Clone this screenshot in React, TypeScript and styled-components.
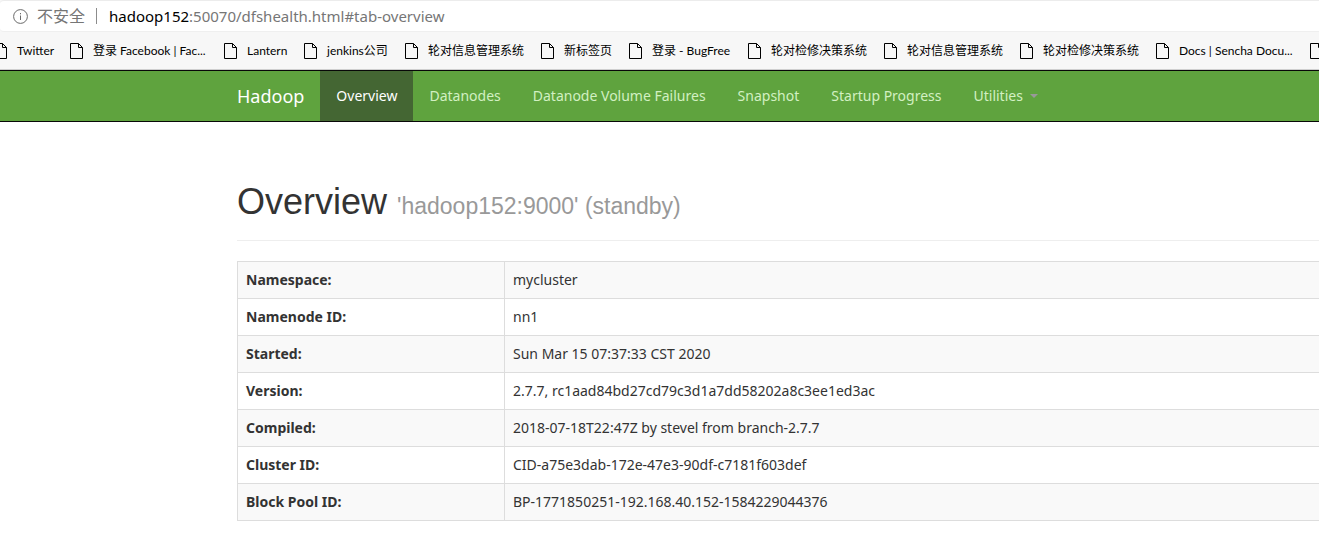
import React from "react";
import styled, { createGlobalStyle } from "styled-components";

const uiFont = `"Noto Sans", "Noto Sans CJK SC", sans-serif`;

const GlobalStyle = createGlobalStyle`
  * { box-sizing: border-box; }
  body {
    margin: 0;
    background: #fff;
    color: #333;
    font-family: ${uiFont};
    font-size: 14px;
    line-height: 20px;
    overflow-x: hidden;
  }
`;

const BrowserChrome = styled.header`
  background: #f7f7f7;
  border-bottom: 1px solid #cfcfcf;
`;

const AddressBar = styled.div`
  display: flex;
  align-items: center;
  height: 32px;
  padding-left: 13px;
  background: #fff;
  border-top: 1px solid #ececec;
  border-bottom: 1px solid #efefef;
  border-radius: 4px 0 0 4px;
  font-size: 16px;
  color: #767676;
`;

const SecurityLabel = styled.span`
  margin-left: 9px;
  padding-right: 11px;
`;

const Separator = styled.span`
  width: 1px;
  height: 16px;
  background: #8c8c8c;
`;

const Url = styled.span`
  margin-left: 12px;
  font-size: 15px;
`;

const Host = styled.span`
  color: #000;
`;

const BookmarkBar = styled.nav`
  display: flex;
  height: 37px;
  margin-left: -6px;
  overflow: hidden;
`;

const Bookmark = styled.a<{ $width: number }>`
  display: flex;
  flex: 0 0 ${(p) => p.$width}px;
  align-items: center;
  gap: 10px;
  color: #000;
  font-family: Lato, "Noto Sans CJK SC", sans-serif;
  font-size: 12px;
  line-height: 16px;
  white-space: nowrap;
  text-decoration: none;
`;

const NavBar = styled.nav`
  display: flex;
  padding-left: 222px;
  background: #5fa33e;
  border-top: 1px solid #080808;
  border-bottom: 1px solid #080808;
`;

const Brand = styled.a`
  padding: 15px 16px 15px 15px;
  color: #fff;
  font-size: 18px;
  line-height: 20px;
  text-decoration: none;
`;

const NavLink = styled.a<{ $active?: boolean }>`
  display: flex;
  align-items: center;
  gap: 7px;
  padding: 15px 16px;
  background: ${(p) => (p.$active ? "#446633" : "transparent")};
  color: ${(p) => (p.$active ? "#fff" : "#d2f0c2")};
  white-space: nowrap;
  text-decoration: none;
`;

const Caret = styled.span`
  border-top: 4px solid #999;
  border-left: 4px solid transparent;
  border-right: 4px solid transparent;
`;

const Content = styled.main`
  padding: 60px 0 20px 237px;
`;

const PageHeader = styled.div`
  padding-bottom: 19px;
  border-bottom: 1px solid #eee;
`;

const Title = styled.h1`
  margin: 0;
  font-family: "Liberation Sans", Arial, sans-serif;
  font-size: 36px;
  font-weight: 400;
  line-height: 39px;
`;

const Subtitle = styled.small`
  color: #999;
  font-size: 23px;
  line-height: 24px;
`;

const InfoTable = styled.table`
  width: 100%;
  margin-top: 20px;
  border-collapse: collapse;
  table-layout: fixed;
`;

const InfoRow = styled.tr`
  &:nth-child(odd) { background: #f9f9f9; }
`;

const RowLabel = styled.th`
  width: 267px;
  padding: 8px;
  border: 1px solid #ddd;
  font-weight: 700;
  text-align: left;
`;

const RowValue = styled.td`
  padding: 8px;
  border: 1px solid #ddd;
  border-right: 0;
`;

const bookmarks: [string, number][] = [
  ["Twitter", 76],
  ["登录 Facebook | Fac...", 154],
  ["Lantern", 80],
  ["jenkins公司", 101],
  ["轮对信息管理系统", 136],
  ["新标签页", 88],
  ["登录 - BugFree", 119],
  ["轮对检修决策系统", 136],
  ["轮对信息管理系统", 136],
  ["轮对检修决策系统", 136],
  ["Docs | Sencha Docu...", 154],
  ["", 14],
];

const tabs = ["Overview", "Datanodes", "Datanode Volume Failures", "Snapshot", "Startup Progress"];

const info = [
  ["Namespace:", "mycluster"],
  ["Namenode ID:", "nn1"],
  ["Started:", "Sun Mar 15 07:37:33 CST 2020"],
  ["Version:", "2.7.7, rc1aad84bd27cd79c3d1a7dd58202a8c3ee1ed3ac"],
  ["Compiled:", "2018-07-18T22:47Z by stevel from branch-2.7.7"],
  ["Cluster ID:", "CID-a75e3dab-172e-47e3-90df-c7181f603def"],
  ["Block Pool ID:", "BP-1771850251-192.168.40.152-1584229044376"],
];

const PageIcon = () => (
  <svg width="13" height="16" viewBox="0 0 13 16" fill="none" stroke="#000" aria-hidden="true">
    <path d="M.5 .5H8.5L12.5 4.5V15.5H.5Z" />
    <path d="M8.5 .5V4.5H12.5" />
  </svg>
);

const InfoIcon = () => (
  <svg width="15" height="15" viewBox="0 0 15 15" fill="none" stroke="#6a6a6a" aria-hidden="true">
    <circle cx="7.5" cy="7.5" r="6.9" />
    <path d="M7.5 6.5V11M7.5 4V5.3" />
  </svg>
);

export default function App() {
  return (
    <>
      <GlobalStyle />
      <BrowserChrome>
        <AddressBar>
          <InfoIcon />
          <SecurityLabel>不安全</SecurityLabel>
          <Separator />
          <Url><Host>hadoop152</Host>:50070/dfshealth.html#tab-overview</Url>
        </AddressBar>
        <BookmarkBar aria-label="Bookmarks">
          {bookmarks.map(([name, width], i) => (
            <Bookmark key={i} href="#" $width={width}>
              <PageIcon />
              {name}
            </Bookmark>
          ))}
        </BookmarkBar>
      </BrowserChrome>
      <NavBar>
        <Brand href="#">Hadoop</Brand>
        {tabs.map((tab, i) => (
          <NavLink key={tab} href="#" $active={i === 0}>{tab}</NavLink>
        ))}
        <NavLink href="#">Utilities <Caret /></NavLink>
      </NavBar>
      <Content>
        <PageHeader>
          <Title>Overview <Subtitle>'hadoop152:9000' (standby)</Subtitle></Title>
        </PageHeader>
        <InfoTable>
          <tbody>
            {info.map(([label, value]) => (
              <InfoRow key={label}>
                <RowLabel scope="row">{label}</RowLabel>
                <RowValue>{value}</RowValue>
              </InfoRow>
            ))}
          </tbody>
        </InfoTable>
      </Content>
    </>
  );
}
